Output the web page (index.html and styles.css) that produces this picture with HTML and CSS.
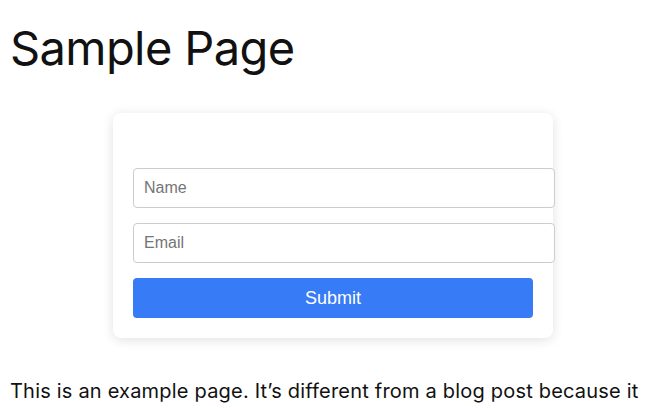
FILE: index.html
```html
<!DOCTYPE html>
<html>
<head>
<meta charset="utf-8">
<link rel="stylesheet" href="styles.css">
</head>
<body>
<main class="page">
  <h1 class="title">Sample Page</h1>
  <div class="card">
    <div class="card-spacer"></div>
    <form class="form">
      <input class="field" type="text" placeholder="Name">
      <input class="field" type="email" placeholder="Email">
      <button class="submit" type="button">Submit</button>
    </form>
  </div>
  <p class="text">This is an example page. It’s different from a blog post because it</p>
</main>
</body>
</html>
```
FILE: styles.css
```css
html, body {
  margin: 0;
  padding: 0;
  background: #ffffff;
}
.page {
  padding: 0 10px;
  font-family: Inter, "Noto Sans", sans-serif;
  color: #111111;
}
.title {
  margin: 0;
  padding-top: 20px;
  font-size: 47px;
  font-weight: 400;
  line-height: 56px;
  letter-spacing: -0.6px;
}
.card {
  width: 400px;
  margin: 37px 0 0 103px;
  padding: 20px;
  background: #fff;
  border-radius: 8px;
  box-shadow: 0 2px 12px rgba(0,0,0,0.12);
}
.card-spacer {
  height: 35px;
}
.form {
  display: flex;
  flex-direction: column;
  gap: 15px;
  align-items: flex-start;
}
.field {
  width: 400px;
  box-sizing: content-box;
  height: 18px;
  padding: 10px;
  border: 1px solid #cccccc;
  border-radius: 4px;
  font-family: "Liberation Sans", Arial, sans-serif;
  font-size: 16px;
  color: #333;
  outline: none;
}
.field::placeholder {
  color: #757575;
}
.submit {
  width: 400px;
  height: 40px;
  border: none;
  border-radius: 4px;
  background: #377bf6;
  color: #ffffff;
  font-family: "Liberation Sans", Arial, sans-serif;
  font-size: 18px;
  cursor: pointer;
}
.text {
  margin: 38px 0 0;
  font-size: 20px;
  line-height: 30px;
  letter-spacing: 0.2px;
  white-space: nowrap;
}
```
